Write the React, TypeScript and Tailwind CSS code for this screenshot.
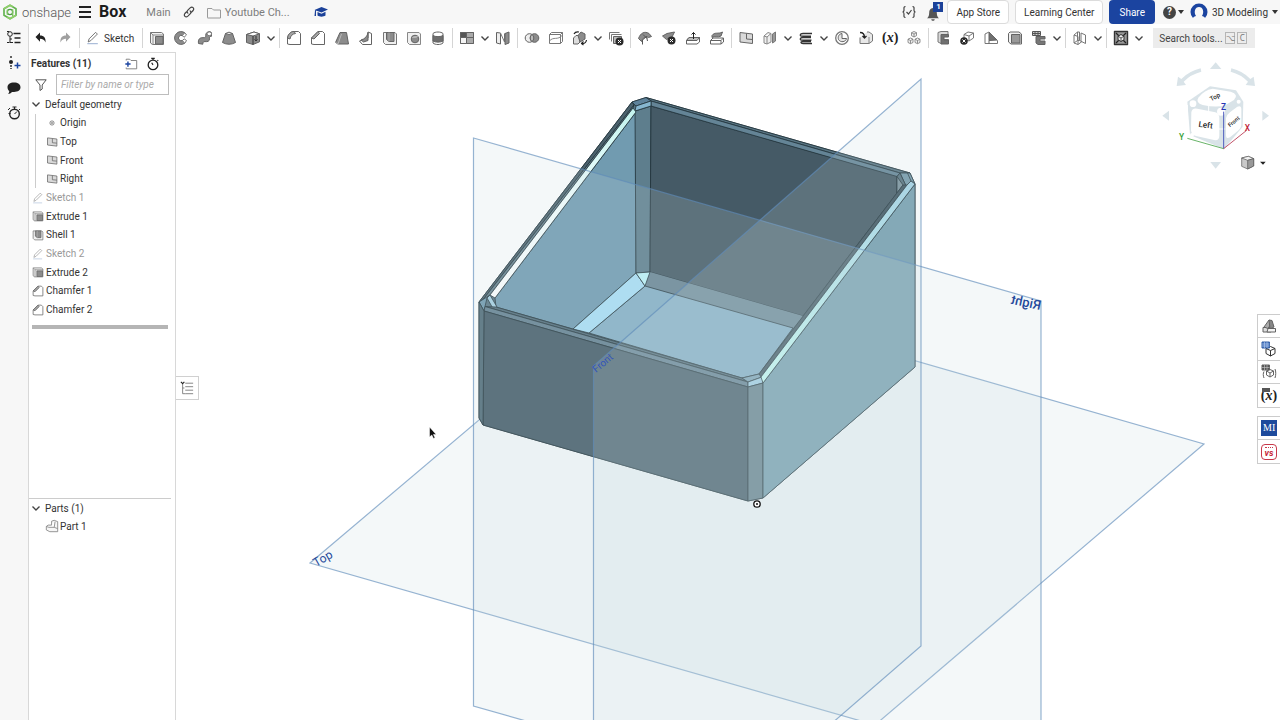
import type { ReactNode } from 'react';

type IconProps = { children: ReactNode; className?: string };

function Icon({ children, className = 'size-4' }: IconProps) {
  return (
    <svg viewBox="0 0 16 16" className={className} fill="none" stroke="#636363" strokeWidth="1" strokeLinejoin="round" aria-hidden="true">
      {children}
    </svg>
  );
}

const DARK = '#8c8c8c';
const LIGHT = '#d9d9d9';

const glyphs: Record<string, ReactNode> = {
  extrude: (
    <>
      <path d="M1.5 13V2.5h11L14.5 4v10.5H3.500z" fill="#f2f2f2" stroke="#777" />
      <path d="M1.5 2.5 4 5h10.5M4 5v9.5" stroke="#888" />
      <path d="M6.5 6.5h7.5v7.5H6.5z" fill={DARK} stroke="#666" />
    </>
  ),
  revolve: (
    <>
      <path d="M12 3A6.4 6.4 0 1 0 12 13L9.7 10.3A2.7 2.7 0 1 1 9.7 5.8z" fill={DARK} />
      <path d="M12 3 13.5 5 11 7.3 9.7 5.8M12 13l1.5-2.5-2.3-1.6-1.5 1.4" fill="#fff" stroke="#777" />
    </>
  ),
  sweep: (
    <>
      <path d="M1.5 13.5c-.6-4 1-6 4.5-5.8 2.4.1 2.7-.4 2.7-2C8.7 3 10 1.7 13 1.7l1.5 1v3.6c-2.5 0-2 1.200-2 2.500 0 2.700-2 3-4.500 2.800-1.800-.1-2.200.6-2.200 2.600z" fill={DARK} />
      <ellipse cx="12.3" cy="3.8" rx="2.3" ry="1.9" fill="#fff" stroke="#777" />
    </>
  ),
  loft: (
    <>
      <path d="M4.5 3.5 1.5 12.5Q8 16 14.5 12.5L11.5 3.5z" fill={DARK} />
      <path d="M4.5 3.5Q8 .8 11.5 3.5 8 5.500 4.500 3.500z" fill="#fff" stroke="#666" />
    </>
  ),
  thicken: (
    <>
      <path d="M1.5 4.5 9 2l5.500 1.800v8L8 14.500l-6.500-2z" fill={DARK} />
      <path d="M1.5 4.5 9 2l5.500 1.800L8 6z" fill="#fff" />
      <path d="M8 6v8.500M11 6v5M9.500 9.500 11 11l1.500-1.500" stroke="#333" />
    </>
  ),
  fillet: (
    <>
      <path d="M1.5 14V8C2 4.500 4.500 1.500 8 1.500h4.500l2 2V14.500H4z" fill="#fff" stroke="#666" />
      <path d="M1.5 8C2 4.500 4.500 1.500 8 1.500l1.500 2C6.500 3.800 4.300 6 4 9z" fill="#a5a5a5" />
    </>
  ),
  chamfer: (
    <>
      <path d="M1.5 14V8L8 1.500h4.500l2 2V14.500H4z" fill="#fff" stroke="#666" />
      <path d="M1.5 8 8 1.500l1.500 2L4 9z" fill="#a5a5a5" />
    </>
  ),
  draft: (
    <>
      <path d="M1.5 12.5 6 2.500h6.500L14.500 14H4z" fill={DARK} />
      <path d="m1.5 12.5 2.500 1.500L7.500 4" stroke="#bbb" />
    </>
  ),
  rib: (
    <>
      <path d="M1.5 11 10 8V2l3.500 1.500v11H4.500z" fill="#fff" />
      <path d="M3 10C7 9 9.500 6 10 2.500v8L5.500 12z" fill={DARK} />
    </>
  ),
  shell: (
    <>
      <path d="M1.5 12.5v-10H13L14.500 4v10.500H3.500z" fill="#f0f0f0" stroke="#777" />
      <path d="M4.5 2.5h7.500v9H7L4.500 9.500z" fill={DARK} stroke="#666" />
      <path d="M7 2.5v9" stroke="#aaa" />
    </>
  ),
  hole: (
    <>
      <path d="M1.5 12.5v-10H13L14.500 4v10.500H3.500z" fill="#f0f0f0" stroke="#888" />
      <circle cx="9" cy="9" r="3.8" fill={DARK} />
      <path d="M6.5 7.5C8 6.500 10 7.500 11.500 6.500" stroke="#ddd" />
    </>
  ),
  thread: (
    <>
      <path d="M3 3.5v9.500c2 2 8 2 10 0V3.500c-2-2-8-2-10 0z" fill="#fff" />
      <path d="M3 5.5c2 1.500 8 1.500 10 0v5.500c-2 1.500-8 1.500-10 0z" fill="#6d6d6d" />
    </>
  ),
  pattern: (
    <>
      <path d="M1.5 2.5h13v11h-13z" fill="#fff" />
      <path d="M1.5 2.5h6v5h-6z" fill="#555" />
      <path d="M7.5 2.5h7v5h-7zM7.500 7.500h7v6h-7z" fill="#aaa" />
      <path d="M1.5 7.5h6v6h-6z" fill="#f4f4f4" />
    </>
  ),
  mirror: (
    <>
      <path d="M1.5 2.500 5.500 3v11l-4-1z" fill="#eee" />
      <path d="m5.500 3 4 9V3.500" fill="#fff" stroke="#777" />
      <path d="M10 3.500 14 2v11l-4 1.500z" fill={DARK} />
    </>
  ),
  boolean: (
    <>
      <circle cx="5.5" cy="8" r="4.3" fill="#eee" />
      <circle cx="10.5" cy="8" r="4.3" fill={DARK} />
      <path d="M8 4.500a4.300 4.300 0 0 1 0 7 4.300 4.300 0 0 1 0-7z" fill="#bbb" />
    </>
  ),
  split: (
    <>
      <path d="M1.500 4.500 3.500 2.500h11v9l-2 2h-11zM1.500 4.500h11v9m0-9 2-2" fill="#fff" stroke="#777" />
      <path d="M1.500 11c4-5 8 0 13-6" stroke="#888" />
    </>
  ),
  transform: (
    <>
      <path d="M1.500 8 4 5.500h4V12l-2 2H1.500z" fill="#ddd" />
      <path d="M6 5.500 9 2l4 2v5l-5 3z" fill={DARK} />
      <path d="M9.500 13.500c2.500.5 4.500-1 5-3.500M2 4C3 2 4.500 1.500 7 2M11.500 11.500l-2 2 2 1.500" stroke="#222" strokeWidth="1.200" />
    </>
  ),
  deletePart: (
    <>
      <path d="M1.500 9.500v-7h10M3.500 11.500v-7h10" stroke="#777" />
      <path d="M5.500 6.500h8v7h-8z" fill="#bbb" />
      <circle cx="11.500" cy="11.500" r="4" fill="#2b2b2b" stroke="none" />
      <path d="m10 10 3 3m0-3-3 3" stroke="#fff" />
    </>
  ),
  modifyFillet: (
    <>
      <path d="M1.500 8.500C3.500 3 7.500.8 12 3.500l2.500 3-3 1C8.500 6 5.500 8 4.500 11.500z" fill={DARK} />
      <path d="M5.500 14.500V10l4-3.500 1 4.500M6 4.500l4 4" stroke="#555" />
    </>
  ),
  deleteFace: (
    <>
      <path d="M1.500 6 6 3.500 13.500 2 11 7 5.500 9.500z" fill={DARK} />
      <circle cx="10.500" cy="10.500" r="4" fill="#2b2b2b" stroke="none" />
      <path d="m9 9 3 3m0-3-3 3" stroke="#fff" />
    </>
  ),
  moveFace: (
    <>
      <path d="M1.500 10.500 4 7.500h10.500V12l-2.500 2H1.500z" fill="#fff" />
      <path d="M4 7.500h10.500L12 10.500H1.500z" fill="#bbb" />
      <path d="M8.500 9V2.500M6.500 4.500l2-2 2 2" stroke="#222" />
    </>
  ),
  replaceFace: (
    <>
      <path d="M1.500 10.500 4 8h10.500v4L12 14H1.500zM1.500 10.500H12V14m0-3.500L14.500 8" fill="#fff" />
      <path d="M3 5.500C6 1.500 9 4.500 13.500 2L12 6C8 8 6 5.500 3 7.500z" fill={DARK} />
    </>
  ),
  plane: (
    <>
      <path d="m2 2.500 12.500 1.500v9.500L2 12z" fill={LIGHT} stroke="#666" />
      <path d="M8.500 3.500v5.500l6 .5" stroke="#666" />
    </>
  ),
  frame: (
    <>
      <path d="M2 6 6 2.500l3 1V12l-4 2-3-1zM2 6l3 1 4-3.500M5 7v7" fill="#eee" stroke="#888" />
      <path d="M10.500 4 13.500 2v9l-3 2z" fill="#999" stroke="#777" />
    </>
  ),
  helix: (
    <path d="M14 3.500H5C1.500 3.500 1.500 6 4 6.200h9M13 7.500H5C1.500 7.500 1.500 10 4 10.200h9.500M13 11.500H5c-3 0-2.500 2 0 2h9" stroke="#333" strokeWidth="1.300" />
  ),
  wrap: (
    <>
      <circle cx="8" cy="8" r="6.300" fill="#fff" stroke="#777" strokeWidth="1.300" />
      <path d="M8 3.500V8.500h4.500C12 12 6.500 13 4.500 9.500 3.500 6.500 5 4 8 3.500z" fill="#e5e5e5" />
    </>
  ),
  derived: (
    <>
      <path d="M2 7.500v6h9l3.500-2.500V4.500L11 2H9" fill="#e8e8e8" stroke="#777" />
      <path d="M2 2.500c3 0 4.500 1 4.500 5M4.500 6l2 2 2-2" stroke="#222" strokeWidth="1.300" />
      <path d="M11 13.500V7" stroke="#888" />
    </>
  ),
  composite: (
    <path d="m8 1.500 2.500 1.200v3L8 7 5.500 5.700v-3zM4.500 8 7 9.200v3.300l-2.500 1.200L2 12.500V9.200zM11.500 8 14 9.200v3.300l-2.500 1.200L9 12.500V9.200zM5.500 2.700 8 4l2.500-1.300M8 4v3M2 9.200l2.500 1.300L7 9.200m2 0 2.500 1.300L14 9.200m-9.500 1.300v3m7-3v3" fill="#f2f2f2" stroke="#777" strokeWidth=".8" />
  ),
  sheetMetal: (
    <>
      <path d="M3 2.500 6 1.500h7v3H8.500v5h5v4H6L3 12z" fill={LIGHT} stroke="#777" />
      <path d="M6 4.500h7.500V7H9v3h4.500v4H6z" fill="#707070" />
    </>
  ),
  cubeDelete: (
    <>
      <path d="M5 4.500 9 2l5.500 1v5L10 11 5 9z" fill="#fff" stroke="#777" />
      <path d="M5 4.500 10 6l4.500-3M10 6v5" stroke="#777" />
      <circle cx="5" cy="11" r="3.800" fill="#2b2b2b" stroke="none" />
      <path d="m3.500 9.500 3 3m0-3-3 3" stroke="#fff" />
    </>
  ),
  flange: (
    <>
      <path d="M2 13.500V4l4-2 8.500 8.500v3z" fill="#fff" stroke="#777" />
      <path d="M6 2.500 14 10l-8 .5z" fill="#707070" />
      <path d="M6 10.500v3" />
    </>
  ),
  bend: (
    <>
      <path d="M1.500 3.500 3 2h9l2.500 2v10H4l-2.500-2z" fill="#f0f0f0" stroke="#666" />
      <path d="M4.500 4.500h8.500v8.500H4.500z" fill="#999" />
    </>
  ),
  sheetTable: (
    <>
      <path d="M1.500 1.500h8v4h-8zM1.500 3.500h8M4 1.500v4M7 1.500v4" fill="#ccc" stroke="#555" />
      <path d="M5 6.500h9v2.500H9v2h5v3.500H7L5 13z" fill="#777" />
    </>
  ),
  weldment: (
    <path d="M2 5v8l4 1.500V6.500zM2 5l3.500-3v8.500L2 13M5.500 2h2v8.500l6 3V5L9 3v8M5.500 10.500h2M6 14.500l4-3" stroke="#777" />
  ),
  custom: (
    <>
      <path d="M1.500 1.500h13v13h-13z" fill="#999" stroke="#333" strokeWidth="1.400" />
      <path d="m3 3 10 10M13 3 3 13" stroke="#222" strokeWidth="1.300" />
      <path d="m8 4.500 3 1.700v3.600L8 11.500 5 9.800V6.200z" fill="#eee" stroke="#333" />
      <path d="M5 6.200 8 8l3-1.800M8 8v3.500" stroke="#333" strokeWidth=".8" />
    </>
  ),
  pencil: (
    <>
      <path d="M2.500 12.500 3.500 9 11 1.500l2 2L5.500 11z" fill="#fff" />
      <path d="M1.500 14.500h12" stroke="#8aa4cc" />
    </>
  ),
  origin: (
    <>
      <circle cx="8" cy="8" r="2.800" stroke="#666" />
      <circle cx="8" cy="8" r="1" fill="#333" stroke="none" />
    </>
  ),
  part: (
    <path d="M1.500 8.500 3.500 7h4V2.500L10.500 1.500 14.500 3v11.500h-9l-4-2zM1.500 8.500l3 1h6l1-6.500m-1 6.500 4 1.500" fill="#f6f6f6" stroke="#888" />
  ),
};

const VARIABLE = 'variable';
const MENU = 'menu';

// groups are separated by a divider, "menu" is the small chevron beside an icon
const toolGroups: string[][] = [
  ['extrude', 'revolve', 'sweep', 'loft', 'thicken', MENU],
  ['fillet', 'chamfer', 'draft', 'rib', 'shell', 'hole', 'thread'],
  ['pattern', MENU, 'mirror'],
  ['boolean', 'split', 'transform', MENU, 'deletePart'],
  ['modifyFillet', 'deleteFace', 'moveFace', 'replaceFace'],
  ['plane', 'frame', MENU, 'helix', MENU, 'wrap', 'derived', VARIABLE, 'composite'],
  ['sheetMetal', 'cubeDelete', 'flange', 'bend', 'sheetTable', MENU],
  ['weldment', MENU],
  ['custom', MENU],
];

function Chevron() {
  return (
    <svg viewBox="0 0 10 10" className="size-2.5 shrink-0" fill="none" stroke="#444" strokeWidth="1.4" aria-hidden="true">
      <path d="M1.500 3.500 5 7l3.500-3.500" />
    </svg>
  );
}

function Caret() {
  return (
    <svg viewBox="0 0 6 4" className="h-1 w-1.5 shrink-0" fill="#333" aria-hidden="true">
      <path d="M0 0h6L3 4z" />
    </svg>
  );
}

function ToolButton({ name }: { name: string }) {
  if (name === MENU) {
    return (
      <button type="button" aria-label="More tools" className="flex h-6 w-3 shrink-0 items-center justify-center">
        <Chevron />
      </button>
    );
  }
  return (
    <button type="button" aria-label={name} className="flex size-6 shrink-0 items-center justify-center">
      {name === VARIABLE ? (
        <span className="font-['Liberation_Serif',serif] text-sm leading-none font-bold text-[#222]">
          (<i>x</i>)
        </span>
      ) : (
        <Icon>{glyphs[name]}</Icon>
      )}
    </button>
  );
}

function Divider() {
  return <span className="mx-0.5 h-5 w-px shrink-0 bg-[#d5d5d5]" />;
}

function Header() {
  return (
    <header className="flex h-6 shrink-0 items-center bg-[#f7f7f7] pr-0.5 text-[#333]">
      <a href="#home" className="flex items-center gap-1 pl-0.5">
        <svg viewBox="0 0 48 48" className="size-4" fill="none" strokeLinejoin="round" aria-hidden="true">
          <path d="M24 4 42 14v20L24 44 6 34V14z" stroke="#62b34e" strokeWidth="5" />
          <path d="M6 14 24 4l8 4.500M42 34 24 44l-9-5" stroke="#8fce6a" strokeWidth="5" />
          <circle cx="24" cy="24" r="8" stroke="#4c9c42" strokeWidth="4" />
          <path d="M32 16v20M16 32V17" stroke="#7cc35f" strokeWidth="4" />
        </svg>
        <span className="text-[13px] leading-none font-light text-[#555]">onshape</span>
      </a>
      <button type="button" aria-label="Main menu" className="ml-2 flex w-3 flex-col gap-[3px]">
        <span className="h-0.5 w-full bg-[#222]" />
        <span className="h-0.5 w-full bg-[#222]" />
        <span className="h-0.5 w-full bg-[#222]" />
      </button>
      <h1 className="ml-2 text-base leading-6 font-bold text-[#1c1c1c]">Box</h1>
      <span className="ml-5 pt-0.5 text-[11px] text-[#7d7d7d]">Main</span>
      <button type="button" aria-label="Versions" className="ml-3">
        <svg viewBox="0 0 16 16" className="size-3" fill="none" stroke="#444" strokeWidth="1.600" strokeLinecap="round">
          <path d="M6.500 9.500c-1.500-1.500-1-3 0-4l3-3c3-2.500 6 .5 4 3.500l-2 2M9.500 6.500c1.500 1.500 1 3 0 4l-3 3c-3 2.500-6-.5-4-3.500l2-2" />
        </svg>
      </button>
      <a href="#folder" className="ml-3 flex items-center gap-1 pt-0.5 text-[11px] text-[#7d7d7d]">
        <svg viewBox="0 0 14 12" className="h-3 w-3.5" fill="none" stroke="#999" aria-hidden="true">
          <path d="M.5 10.500v-9H5L6.500 3h7v8H.5z" />
        </svg>
        Youtube Ch...
      </a>
      <button type="button" aria-label="Education plan" className="ml-6">
        <svg viewBox="0 0 14 12" className="h-3 w-3.5" fill="#1b4199">
          <path d="M7.500 1 14 3.500 7.500 6.500.5 4zM3.500 6l4 1.700L11.500 5.800V9.500c-2 1.500-6 1.500-8 0zM1 4.500h1V10H.5z" />
        </svg>
      </button>

      <div className="ml-auto flex items-center">
        <button type="button" aria-label="Feature script" className="mr-2.5 flex">
          <svg viewBox="0 0 16 14" className="h-3.5 w-4" fill="none" stroke="#444" strokeWidth="1.200">
            <path d="M4.500 1.500C2.500 1.500 3 3 3 5c0 1.200-.5 2-1.500 2C2.500 7 3 7.800 3 9c0 2-.5 3.500 1.500 3.500M11.500 1.500c2 0 1.500 1.500 1.500 3.500 0 1.200.5 2 1.500 2-1 0-1.500.8-1.500 2 0 2 .5 3.500-1.500 3.500M5.500 7l2 2 3-4" />
          </svg>
        </button>
        <button type="button" aria-label="Notifications, 1 new" className="relative mr-1 h-5 w-4">
          <svg viewBox="0 0 14 16" className="absolute bottom-0 left-0 h-4 w-3" fill="#555">
            <path d="M7 1C4 1 2.500 3.500 2.500 7 2.500 10 1.500 11.500 0 13h14C12.500 11.500 11.500 10 11.500 7 11.500 3.500 10 1 7 1zM5 14h4c0 2.500-4 2.500-4 0z" />
          </svg>
          <span className="absolute top-0 right-0 flex size-2.5 items-center justify-center bg-[#1b4199] text-[8px] leading-none font-bold text-white">1</span>
        </button>
        <button type="button" className="h-6 rounded border border-[#dcdcdc] bg-white px-2 text-[10px]">App Store</button>
        <button type="button" className="ml-1.5 h-6 rounded border border-[#dcdcdc] bg-white px-2 text-[10px]">Learning Center</button>
        <button type="button" className="ml-1.5 h-6 rounded bg-[#1b44a0] px-2.5 text-[10px] text-white">Share</button>
        <button type="button" aria-label="Help" className="ml-2 flex items-center gap-0.5">
          <span className="flex size-[13px] items-center justify-center rounded-full bg-[#444] text-[10px] leading-none font-bold text-white">?</span>
          <Caret />
        </button>
        <button type="button" className="ml-1.5 flex items-center gap-1 text-[10px]">
          <svg viewBox="0 0 18 18" className="size-[18px]" aria-hidden="true">
            <circle cx="9" cy="9" r="8.500" fill="#1b44a0" />
            <path d="M2 18c0-3 2-4.500 4-5C3.500 9 5 4 9 4s5.500 5 3 9c2 .5 4 2 4 5z" fill="#f7f7f7" />
          </svg>
          3D Modeling
          <Caret />
        </button>
      </div>
    </header>
  );
}

function Toolbar() {
  return (
    <div className="flex h-7 min-w-0 shrink-0 items-center overflow-hidden bg-white">
      <button type="button" aria-label="Undo" className="flex size-6 shrink-0 items-center justify-center">
        <svg viewBox="0 0 12 12" className="size-3" fill="#222">
          <path d="M5 .5v3c4 0 6 2.500 5.500 7C9.500 8 8 6.800 5 6.800v3L.5 5z" />
        </svg>
      </button>
      <button type="button" aria-label="Redo" className="flex size-6 shrink-0 items-center justify-center">
        <svg viewBox="0 0 12 12" className="size-3" fill="#a0a0a0">
          <path d="M7 .5v3c-4 0-6 2.500-5.500 7C2.500 8 4 6.800 7 6.800v3L11.500 5z" />
        </svg>
      </button>
      <Divider />
      <button type="button" className="ml-1 flex shrink-0 items-center gap-1 pr-1.5 text-[10px] text-[#333]">
        <Icon className="size-3.5">{glyphs.pencil}</Icon>
        Sketch
      </button>
      {toolGroups.map((group) => (
        <div key={group[0]} className="flex shrink-0 items-center">
          <Divider />
          {group.map((name, i) => (
            <ToolButton key={i} name={name} />
          ))}
        </div>
      ))}
      <div className="ml-2 flex h-5 shrink-0 items-center bg-[#ececec] pr-2 pl-1.5">
        <input
          type="text"
          aria-label="Search tools"
          placeholder="Search tools..."
          className="w-[66px] bg-transparent text-[10px] text-[#444] outline-none placeholder:text-[#444]"
        />
        <kbd className="flex h-3 w-2.5 items-center justify-center border border-[#b5b5b5] font-sans text-[8px] leading-none text-[#777]">⌥</kbd>
        <kbd className="ml-0.5 flex h-3 w-2.5 items-center justify-center border border-[#b5b5b5] font-sans text-[8px] leading-none text-[#777]">C</kbd>
      </div>
    </div>
  );
}

function Rail() {
  return (
    <nav className="flex w-[29px] shrink-0 flex-col items-center border-r border-[#d8d8d8] bg-[#f7f7f7] pt-0.5">
      <button type="button" aria-label="Feature list" className="flex size-6 items-center justify-center">
        <Icon>
          <path d="M7.500 3.500h7M8.500 8h6M8.500 12.500h6" stroke="#222" strokeWidth="1.400" />
          <circle cx="4" cy="4" r="2.300" stroke="#222" />
          <path d="M4 6.500v6h3M4 9h2" stroke="#222" />
          <path d="M1 1.500h2M1 12.500h2.500" stroke="#222" />
        </Icon>
      </button>
      <button type="button" aria-label="Insert" className="flex h-[26px] w-6 items-center justify-center">
        <Icon>
          <path d="M5 1v3M5 10v4" stroke="#222" strokeDasharray="2 1" strokeWidth="1.400" />
          <circle cx="5" cy="7" r="2" fill="#222" stroke="none" />
          <path d="M11.500 7.500v6M8.500 10.500h6" stroke="#1b44a0" strokeWidth="1.500" />
        </Icon>
      </button>
      <button type="button" aria-label="Comments" className="flex h-6 w-6 items-center justify-center">
        <Icon>
          <path d="M8 2.500c4 0 6.500 2 6.500 4.800S12 12 8 12c-.8 0-1.500 0-2 0-1 1.300-2.500 2-4 2 1-1 1.300-2 1.200-3C2 10 1.500 8.700 1.500 7.300 1.500 4.500 4 2.500 8 2.500z" fill="#222" stroke="none" />
        </Icon>
      </button>
      <button type="button" aria-label="History" className="flex h-[26px] w-6 items-center justify-center">
        <Icon>
          <circle cx="8.500" cy="9" r="4.800" stroke="#222" strokeWidth="1.400" />
          <path d="M8.500 4V2M6.500 2h4M8.500 9 11 6.500M2 5l2-2M2.500 8.500h2M13 5l1-1" stroke="#222" />
        </Icon>
      </button>
    </nav>
  );
}

type TreeItem = { label: string; icon: string; nested?: boolean; muted?: boolean };

const treeItems: TreeItem[] = [
  { label: 'Origin', icon: 'origin', nested: true },
  { label: 'Top', icon: 'plane', nested: true },
  { label: 'Front', icon: 'plane', nested: true },
  { label: 'Right', icon: 'plane', nested: true },
  { label: 'Sketch 1', icon: 'pencil', muted: true },
  { label: 'Extrude 1', icon: 'extrude' },
  { label: 'Shell 1', icon: 'shell' },
  { label: 'Sketch 2', icon: 'pencil', muted: true },
  { label: 'Extrude 2', icon: 'extrude' },
  { label: 'Chamfer 1', icon: 'chamfer' },
  { label: 'Chamfer 2', icon: 'chamfer' },
];

function TreeRow({ label, icon, nested, muted }: TreeItem) {
  return (
    <li className={nested ? 'ml-1.5 flex items-center border-l border-[#ccc] pl-2.5' : 'flex items-center pl-[3px]'}>
      <Icon className={muted ? 'size-3 opacity-60' : 'size-3'}>{glyphs[icon]}</Icon>
      <span className={muted ? 'pl-0.5 text-[#999]' : 'pl-0.5'}>{label}</span>
    </li>
  );
}

function FeaturePanel() {
  return (
    <aside className="flex w-[147px] shrink-0 flex-col border-t border-r border-[#d8d8d8] bg-white text-[10px] text-[#333]">
      <section className="flex-1">
        <div className="flex h-[21px] items-center pr-[15px] pl-0.5">
          <h2 className="flex-1 font-bold">Features (11)</h2>
          <button type="button" aria-label="Add folder" className="mr-2">
            <Icon className="size-3.5">
              <path d="M2.500 4V2.500h4L8 4h6.500v9.500h-12V12" stroke="#777" />
              <path d="M4.500 5v6M1.500 8h6" stroke="#1b44a0" strokeWidth="1.600" />
            </Icon>
          </button>
          <button type="button" aria-label="Regeneration times">
            <Icon className="size-3.5">
              <circle cx="8" cy="9" r="5.500" stroke="#222" strokeWidth="1.500" />
              <path d="M8 3.500v-2M6 1.500h4M8 9 6.500 6.500M13 3.500l1 1" stroke="#222" strokeWidth="1.300" />
            </Icon>
          </button>
        </div>
        <div className="flex h-[21px] items-center px-1.5">
          <svg viewBox="0 0 12 12" className="size-3 shrink-0" fill="none" stroke="#555" aria-hidden="true">
            <path d="M.8.8h10.400L7.200 6v4L5 11.500V6z" />
          </svg>
          <input
            type="text"
            aria-label="Filter features"
            placeholder="Filter by name or type"
            className="ml-[9px] h-[21px] min-w-0 flex-1 border border-[#bdbdbd] px-1 italic outline-none placeholder:text-[#aaa]"
          />
        </div>
        <ul className="grid h-56 auto-rows-fr">
          <li className="flex items-center gap-1 pl-0.5">
            <Chevron />
            <span>Default geometry</span>
          </li>
          {treeItems.map((item) => (
            <TreeRow key={item.label} {...item} />
          ))}
        </ul>
        <div className="mt-1.5 mr-[7px] ml-[3px] h-1 bg-[#b5b5b5]" />
      </section>
      <section className="h-[222px] shrink-0">
        <div className="mr-1 h-px bg-[#ccc]" />
        <button type="button" className="flex h-[18px] items-center gap-1 pl-0.5">
          <Chevron />
          <span>Parts (1)</span>
        </button>
        <div className="flex h-[18px] items-center pl-4">
          <Icon className="size-3.5">{glyphs.part}</Icon>
          <span className="pl-px">Part 1</span>
        </div>
      </section>
    </aside>
  );
}

const plane = { fill: '#c5dadf', fillOpacity: 0.19, stroke: '#5f8cba', strokeOpacity: 0.65, strokeWidth: 1.2 };

function Model() {
  return (
    <svg viewBox="176 52 1104 668" preserveAspectRatio="xMidYMid slice" className="absolute inset-0 size-full" role="img" aria-label="Box model">
      <defs>
        <linearGradient id="leftRim" x1="0" y1="0" x2="0" y2="1">
          <stop offset="0" stopColor="#c2f3ee" />
          <stop offset=".5" stopColor="#f4ffff" />
          <stop offset="1" stopColor="#ffffff" />
        </linearGradient>
        <linearGradient id="rightRim" x1="0" y1="0" x2="0" y2="1">
          <stop offset="0" stopColor="#a4d2e4" />
          <stop offset="1" stopColor="#c8fff5" />
        </linearGradient>
      </defs>

      <path d="M310 563 642 282 1204 444 875 725z" {...plane} />

      <g stroke="#22333b" strokeWidth=".8" strokeLinejoin="round">
        {/* outer silhouette, its fill shows as the rim */}
        <path d="M479 302 632 102 646 97.500 910 173 915 184V367L763 498 748 501 483 425 479 418z" fill="#587482" />
        {/* interior */}
        <path d="M636 112V273L573 329 496 307 495 298z" fill="#719bb0" />
        <path d="M635 111 651 106 650 272 636 273z" fill="#5e7e8d" />
        <path d="M651 106 897 176V193L803 316 650 272z" fill="#455a66" />
        <path d="M650 272 803 316 793 328 645 286z" fill="#6b8694" stroke="none" />
        <path d="M645 286 793 328 759 374 742 378 589 333z" fill="#86afc5" />
        <path d="M636 273 645 286 589 333 573 329z" fill="#a9def5" />
        <path d="M636 273 650 272 645 286z" fill="#bdf3f8" />
        {/* back rim */}
        <path d="M646 97.500 910 173 900 173 651 101z" fill="#587482" />
        <path d="M651 101 900 173 897 176.500 651 106z" fill="#648496" />
        <path d="M632 102 646 97.500 651 101 636 106z" fill="#5e829a" />
        <path d="M636 106 651 101V106L635 111z" fill="#86b6cf" />
        <path d="M900 173 910 173 915 184 911 181 906 186z" fill="#7498a8" />
        <path d="M897 176.500 900 173 906 186 897 193z" fill="#56707d" />
        <path d="M897 176.500 903 185 897 193z" fill="#7a929c" />
        <path d="M907.500 173 911 181" fill="none" />
        {/* left rim */}
        <path d="M479 302 632 102 634 105 482 301z" fill="#4c626d" />
        <path d="M482 301 634 105 633 108 490 295z" fill="#66818d" />
        <path d="M490 295 633 108 636 112 495 298z" fill="url(#leftRim)" />
        <path d="M479 302 490 295 487 298 485 306.500 484 311z" fill="#6f98ad" />
        <path d="M487 298 490 295 497 307 493 308.500z" fill="#a5cfe2" />
        {/* front rim and faces */}
        <path d="M485 306.500 496 307 742 378 748 382z" fill="#516b78" />
        <path d="M485 306.500 748 382V387L484 311z" fill="#648090" />
        <path d="M742 378 759 374 762 377 748 382z" fill="#7ea3b5" />
        <path d="M748 382 762 377 763 383 748 387z" fill="#a2cfe4" />
        <path d="M484 311 748 387V501L483 425z" fill="#455c68" />
        <path d="M479 302 484 311 483 425 479 418z" fill="#4f6a77" />
        <path d="M748 387 763 383V498L748 501z" fill="#66818c" />
        <path d="M763 383 915 184V367L763 498z" fill="#759eae" />
        {/* right rim */}
        <path d="M759 374 903 185 907 185 761 377z" fill="#405661" />
        <path d="M761 377 907 185 911 181 915 184 763 383z" fill="url(#rightRim)" />
      </g>

      <path d="M473.500 138 1041 301V868L473.500 706z" {...plane} />
      <path d="M593.500 366 921 79V646L593.500 930z" {...plane} />

      <g fill="#24499b" fontSize="13">
        <text transform="translate(316 567) rotate(-30)" fontSize="12">Top</text>
        <text transform="translate(596 373) rotate(-40)" fontSize="10" fill="#3355bb">Front</text>
        {/* seen from behind, so mirrored */}
        <text transform="translate(1040 310) scale(-1 1) rotate(-12)" fontWeight="500">Right</text>
      </g>

      <circle cx="757" cy="504" r="3.200" fill="#fff" stroke="#111" strokeWidth="1.300" />
      <circle cx="757" cy="504" r="1" fill="#111" />
      <path d="M429.500 427v10l2.300-2 1.700 3.500 1.500-.7-1.600-3.300h2.800z" fill="#111" stroke="#fff" strokeWidth=".5" />
    </svg>
  );
}

function ViewCube() {
  return (
    <svg viewBox="0 0 390 375" className="absolute top-[3px] right-0 h-[125px] w-[130px]" role="img" aria-label="View cube">
      <g fill="#d9e3e8">
        <path d="m197 22 17 20h-34zM197 341l16-20h-32zM37 182l20-15v30zM357 182l-20-15v30z" />
        <path d="M152 40Q118 48 94 72L84 65 80 93 108 90 101 80Q122 58 154 50zM244 40Q278 48 301 72L311 65 315 93 287 90 294 80Q273 58 242 50z" />
        <path d="M112 140 180 94 258 106 280 140 278 215 222 282 120 240z" />
      </g>
      <g fill="#fff">
        <path d="M145 128Q162 105 188 101L242 110Q268 118 252 135L228 149Q205 160 158 150 136 142 145 128z" />
        <path d="M124 172Q126 158 142 161L196 172Q208 176 208 190V242Q208 258 192 255L138 243Q124 240 123 225z" />
        <path d="M228 190Q229 180 240 172L262 155Q274 150 274 163V207Q274 220 264 227L240 247Q228 254 228 240z" />
        <circle cx="129" cy="146" r="10" />
        <circle cx="213" cy="170" r="12" />
        <circle cx="266" cy="140" r="6" />
        <circle cx="126" cy="240" r="6" />
      </g>
      <path d="M158 102 172 96M176 150v20M206 222h20M112 150v80" stroke="#fff" strokeWidth="3" />
      <g fill="#222" fontWeight="500">
        <text transform="translate(145 215) rotate(8)" fontSize="24">Left</text>
        <text transform="translate(184 139) rotate(-28)" fontSize="19">Top</text>
        <text transform="translate(240 217) rotate(-40)" fontSize="17">Front</text>
      </g>
      <g strokeWidth="2.500" fill="none">
        <path d="M221 170V281" stroke="#2d3fb5" />
        <path d="M221 281 112 250" stroke="#4aa54a" />
        <path d="M221 281 290 226" stroke="#b5304a" />
      </g>
      <g fontSize="25" fontWeight="500">
        <text x="213" y="166" fill="#2536b5">Z</text>
        <text x="87" y="254" fill="#35a035">Y</text>
        <text x="284" y="229" fill="#c02038">X</text>
      </g>
      <g stroke="#555" strokeWidth="2" strokeLinejoin="round">
        <path d="M275 309 295 304 311 311V333L293 342 275 334z" fill="#c9c9c9" />
        <path d="M275 309 295 304 311 311 293 316z" fill="#f2f2f2" />
        <path d="M293 316 311 311V333L293 342z" fill="#999" />
      </g>
      <path d="M330 320h17l-8 9z" fill="#222" />
    </svg>
  );
}

function SideTools() {
  const cell = 'flex h-[23px] w-[22px] items-center justify-center';
  return (
    <div className="absolute top-[262px] right-0 flex flex-col gap-2">
      <div className="divide-y divide-[#ccc] border border-r-0 border-[#ccc] bg-white">
        <button type="button" aria-label="Appearance" className={cell}>
          <Icon>
            <path d="M2 9.500h8v4.500H2z" fill="#ddd" />
            <path d="m3 9 5-7 3 2.500-4 6z" fill="#aaa" />
            <path d="m8 2 3 .5L13 9l-4 2z" fill="#888" />
            <path d="M7 10.500h7.500V14H6z" fill="#f4f4f4" />
          </Icon>
        </button>
        <button type="button" aria-label="Configurations" className={cell}>
          <Icon>
            <path d="m9.500 5.500 4.500 2v5L9.500 15 5 12.500v-5zM5 7.500l4.500 2 4.500-2M9.500 9.500V15" fill="#fff" stroke="#333" />
            <path d="M1 1h7.500v6H1z" fill="#4a78c2" stroke="#335ea5" />
            <path d="M1 3h7.500M1 5h7.500M3.500 1v6M6 1v6" stroke="#bcd0ee" strokeWidth=".6" />
          </Icon>
        </button>
        <button type="button" aria-label="Custom tables" className={cell}>
          <Icon>
            <path d="m9 5.500 3.500 1.500v4L9 13l-3.500-2V7zM5.500 7 9 9l3.500-2M9 9v4M3 7.500c-1 2-1 4 0 6.500M14 5c1 2.500 1 6 0 9" fill="#fff" />
            <path d="M1 1h7.500v5H1z" fill="#555" />
            <path d="M1 3.500h7.500M3.500 1v5M6 1v5" stroke="#ccc" strokeWidth=".6" />
          </Icon>
        </button>
        <button type="button" aria-label="Variable table" className={`${cell} relative`}>
          <span className="font-['Liberation_Serif',serif] text-sm leading-none font-bold text-[#222]">
            (<i>x</i>)
          </span>
          <span className="absolute top-1 left-1 h-1 w-2 bg-[#555]" />
        </button>
      </div>
      <div className="divide-y divide-[#ccc] border border-r-0 border-[#ccc] bg-white">
        <button type="button" aria-label="MK app" className={cell}>
          <span className="flex size-4 items-center overflow-hidden bg-[#1d4a9c] pl-0.5 font-['Liberation_Serif',serif] text-[10px] leading-none text-white">MI</span>
        </button>
        <button type="button" aria-label="VS app" className={cell}>
          <span className="relative flex size-4 items-end justify-center rounded-sm border border-[#c8384a] text-[9px] leading-[11px] font-bold text-[#c8283c] italic">
            <span className="absolute top-0.5 w-2 border-t border-dotted border-[#c8384a]" />
            vs
          </span>
        </button>
      </div>
    </div>
  );
}

export default function App() {
  return (
    <div className="flex h-screen flex-col overflow-hidden bg-white font-[Roboto,'Liberation_Sans',sans-serif]">
      <Header />
      <div className="flex min-h-0 flex-1">
        <Rail />
        <div className="flex min-w-0 flex-1 flex-col">
          <Toolbar />
          <div className="flex min-h-0 flex-1">
            <FeaturePanel />
            <main className="relative min-w-0 flex-1 overflow-hidden">
              <Model />
              <ViewCube />
              <SideTools />
              <button
                type="button"
                aria-label="Collapse feature list"
                className="absolute top-[324px] left-0 flex h-6 w-[23px] items-center justify-center border border-l-0 border-[#d0d0d0] bg-white"
              >
                <Icon className="size-3.5">
                  <path d="M6 2.500h9M6 6.500h9M6 10.500h9M6 14.500h9M3 3v11.500h3M3 8h2" stroke="#777" />
                  <path d="m1 1 2 2 2-2" stroke="#222" strokeWidth="1.300" />
                </Icon>
              </button>
            </main>
          </div>
        </div>
      </div>
    </div>
  );
}
